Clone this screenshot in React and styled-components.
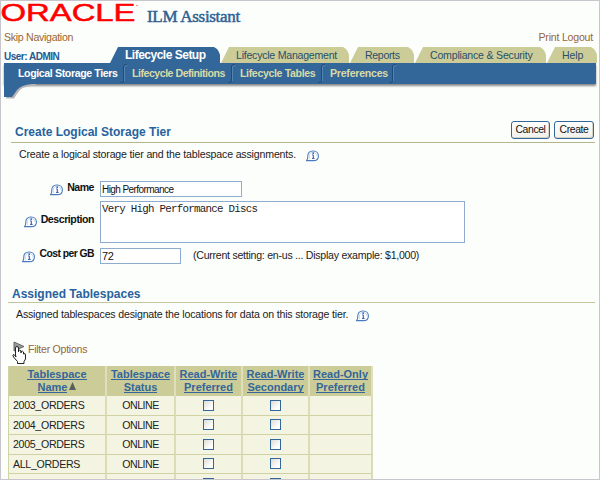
import React from "react";
import styled, { createGlobalStyle } from "styled-components";

const Global = createGlobalStyle`
  * { box-sizing: border-box; }
  body { margin: 0; overflow: hidden; background: #fcfefc; }
`;

const Page = styled.div`
  width: 600px;
  height: 480px;
  overflow: hidden;
  display: flex;
  flex-direction: column;
  background: #fcfefc;
  border: 1px solid #c9c5cc;
  font-family: "Liberation Sans", Arial, sans-serif;
  font-size: 11px;
  color: #222;
`;

const Text = styled.span`
  display: block;
  white-space: nowrap;
  line-height: 14px;
  font-size: ${(p) => p.$size || 10.6}px;
  font-weight: ${(p) => (p.$bold ? 700 : 400)};
  letter-spacing: ${(p) => p.$track || 0}px;
  color: ${(p) => p.$color || "#222"};
`;

const Brand = styled.header`
  height: 28px;
  flex: none;
  display: flex;
  align-items: flex-start;
`;

const Product = styled.h1`
  margin: 6px 0 0 9px;
  font: 400 17px/20px "Liberation Serif", serif;
  -webkit-text-stroke: 0.5px #2f6193;
  letter-spacing: -0.3px;
  color: #2f6193;
  white-space: nowrap;
`;

const Links = styled.nav`
  height: 18px;
  flex: none;
  padding: 1px 6px 0 3px;
  display: flex;
  justify-content: space-between;
`;

const TabRow = styled.nav`
  height: 16px;
  flex: none;
  display: flex;
  padding-left: 3px;
`;

const User = styled.div`
  width: 106px;
  padding-top: 3px;
`;

const Tab = styled.div`
  width: ${(p) => p.$w}px;
  height: 16px;
  margin-right: 1px;
  padding: 1px 0 0 15px;
  background: ${(p) => (p.$active ? "#336699" : "#cccc99")};
  clip-path: polygon(0 100%, 8px 0, calc(100% - 6px) 0, calc(100% - 3px) 2px, calc(100% - 1px) 5px, 100% 8px, 100% 100%);
`;

const SubBar = styled.nav`
  height: 21px;
  flex: none;
  margin: 0 3px 0 3px;
  padding: 3px 0 0 14px;
  display: flex;
  background: #336699;
  box-shadow: 0 2px 2px #8a8a8a;
`;

const SubTab = styled.div`
  width: ${(p) => p.$w}px;
  display: flex;
  justify-content: space-between;
  svg { flex: none; margin: -3px 4px 0 0; }
`;

const Corner = styled.svg`
  display: block;
  flex: none;
  margin-left: 3px;
`;

const TitleBar = styled.div`
  height: 24px;
  flex: none;
  margin: 20px 4px 0 10px;
  padding-left: 4px;
  display: flex;
  justify-content: space-between;
  border-bottom: 1px solid #b5b58c;
`;

const PageTitle = styled(Text)`
  margin: 6px 0 0;
`;

const Buttons = styled.div`
  display: flex;
  gap: 4px;
  padding: 2px 1px 0 0;
`;

const Button = styled.button`
  width: ${(p) => p.$w}px;
  height: 18px;
  padding: 0;
  border: 1px solid #336699;
  border-radius: 3px;
  background: linear-gradient(#fff, #f1f0ea);
  box-shadow: inset -1px -1px 0 #d6d3c8;
  color: #111;
  font: 10.4px/14px "Liberation Sans", sans-serif;
  letter-spacing: -0.4px;
`;

const Note = styled.div`
  flex: none;
  height: ${(p) => p.$h}px;
  padding: ${(p) => p.$top}px 0 0 ${(p) => p.$left}px;
  display: flex;
  gap: ${(p) => p.$gap}px;
  svg { margin-top: 3px; }
`;

const Field = styled.div`
  flex: none;
  height: ${(p) => p.$h}px;
  display: flex;
  align-items: flex-start;
`;

const FieldLabel = styled.label`
  width: 99px;
  margin-top: -1px;
  padding: ${(p) => p.$top}px 6px 0 0;
  display: flex;
  justify-content: flex-end;
  gap: 4px;
  svg { margin-top: 4px; }
`;

const Input = styled.input`
  width: ${(p) => p.$w}px;
  height: 16px;
  padding: 0 1px;
  border: 1px solid #8eacce;
  background: #fff;
  color: #111;
  outline: none;
  font: ${(p) => p.$size || 10}px "Liberation Sans", sans-serif;
  letter-spacing: ${(p) => p.$track || 0}px;
`;

const Area = styled.textarea`
  width: 365px;
  height: 42px;
  padding: 1px;
  margin: 0;
  border: 1px solid #8eacce;
  background: #fff;
  color: #222;
  outline: none;
  resize: none;
  overflow: hidden;
  font: 10.8px/13px "Liberation Mono", monospace;
  letter-spacing: -0.73px;
`;

const Section = styled.div`
  flex: none;
  height: 18px;
  margin: 20px 4px 0 7px;
  padding: 2px 0 0 4px;
  border-bottom: 1px solid #c3c69b;
`;

const Filter = styled.div`
  flex: none;
  height: 27px;
  padding: 3px 0 0 27px;
  position: relative;
`;

const Pointer = styled.svg`
  position: absolute;
  left: 10px;
  top: 0;
`;

const Table = styled.div`
  flex: none;
  width: 365px;
  margin-left: 7px;
  display: grid;
  grid-template-columns: 98px 69px 67px 67px 63px;
  grid-template-rows: 30px;
  grid-auto-rows: 19.5px;
  border-left: 1px solid #d2d3a5;
`;

const Head = styled.div`
  background: #cccc99;
  border-right: 2px solid #dedfbc;
  padding-top: 2px;
  display: flex;
  flex-direction: column;
  align-items: center;
  gap: 1px;
`;

const HeadLine = styled.div`
  display: flex;
  gap: 2px;
  span {
    line-height: 12px;
    height: 12px;
    border-bottom: 1px solid #336699;
  }
  svg { margin-top: 1px; }
`;

const Cell = styled.div`
  display: flex;
  align-items: center;
  justify-content: ${(p) => (p.$left ? "flex-start" : "center")};
  padding-left: ${(p) => (p.$left ? 4 : 0)}px;
  background: #f3f5e2;
  border-right: 2px solid #dcddb8;
  border-bottom: 1px solid #d0d2a4;
`;

const Check = styled.span`
  width: 11px;
  height: 11px;
  border: 1px solid #336699;
  background: linear-gradient(135deg, #dedcd5, #fff 75%);
`;

const Info = () => (
  <svg width="13" height="12" viewBox="0 0 13 12" fill="none">
    <path d="M0.5 10.6H7.5C10.5 10.6 12.4 8.6 12.4 5.9C12.4 3 10.4 1 7.3 1H6.7C3.6 1 1.8 3 1.8 5.8C1.8 7.5 2 8.6 0.5 10.6Z" fill="#fff" stroke="#4a7cbd" strokeWidth="1.1" />
    <path d="M3.2 9.3C3.8 8.7 3.2 7.4 3.2 5.9C3.2 4 4.7 2.5 7 2.5S11 3.9 11 5.9" stroke="#c3d5ec" />
    <path d="M6.2 4.9H7.3V8M6 8.4H8.6" stroke="#2456b0" />
    <rect x="6.5" y="2.5" width="1.5" height="1.4" fill="#2456b0" />
  </svg>
);

const Divider = () => (
  <svg width="8" height="21" viewBox="0 0 8 21" fill="none">
    <path d="M0.5 19.5H2Q3.5 19.5 3.5 17.5V4Q3.5 1.5 5.5 1.5H7" stroke="#1f4b7b" />
    <path d="M4.5 18V4Q4.5 2.5 7.5 2.5" stroke="#5c8bb8" strokeWidth=".8" />
  </svg>
);

const TABS = [
  { t: "Lifecycle Setup", w: 110, size: 12, track: -0.5, active: true },
  { t: "Lifecycle Management", w: 128, track: -0.25 },
  { t: "Reports", w: 64, track: -0.35 },
  { t: "Compliance & Security", w: 131, track: -0.22 },
  { t: "Help", w: 50, track: -0.1 },
];

const SUBS = [
  { t: "Logical Storage Tiers", w: 114, track: -0.38, active: true },
  { t: "Lifecycle Definitions", w: 108, track: -0.48 },
  { t: "Lifecycle Tables", w: 90, track: -0.36 },
  { t: "Preferences", w: 71, track: -0.24 },
];

const COLUMNS = [
  ["Tablespace", "Name"],
  ["Tablespace", "Status"],
  ["Read-Write", "Preferred"],
  ["Read-Write", "Secondary"],
  ["Read-Only", "Preferred"],
];

const ROWS = ["2003_ORDERS", "2004_ORDERS", "2005_ORDERS", "ALL_ORDERS", ""];

export default function App() {
  return (
    <Page>
      <Global />
      <Brand>
        <svg width="137" height="24" viewBox="0 0 137 24">
          <text x="-0.5" y="20" fontFamily="Liberation Sans" fontSize="23" fill="#f00" stroke="#f00" strokeWidth=".5" textLength="135" lengthAdjust="spacingAndGlyphs">ORACLE</text>
          <circle cx="136" cy="4.5" r=".8" fill="#f66" />
        </svg>
        <Product>ILM Assistant</Product>
      </Brand>
      <Links>
        <Text $track={-0.3} $color="#996633">Skip Navigation</Text>
        <Text $track={-0.22} $color="#996633">Print Logout</Text>
      </Links>
      <TabRow>
        <User><Text $bold $size={10} $track={-0.5} $color="#235a92">User: ADMIN</Text></User>
        {TABS.map((x) => (
          <Tab key={x.t} $w={x.w} $active={x.active}>
            <Text $bold={x.active} $size={x.size} $track={x.track} $color={x.active ? "#fff" : "#294f68"}>{x.t}</Text>
          </Tab>
        ))}
      </TabRow>
      <SubBar>
        {SUBS.map((x) => (
          <SubTab key={x.t} $w={x.w}>
            <Text $bold $track={x.track} $color={x.active ? "#fff" : "#d9dba6"}>{x.t}</Text>
            <Divider />
          </SubTab>
        ))}
      </SubBar>
      <Corner width="34" height="15" viewBox="0 0 34 15">
        <path d="M2 14.5H10Q14 8 17 5Q21 2 32 1.5V0H3Z" fill="#b5b5b5" />
        <path d="M0 0H28Q17 1 13 6Q11 9 8 13H0Z" fill="#336699" />
      </Corner>
      <TitleBar>
        <PageTitle as="h2" $bold $size={12} $color="#28629d">Create Logical Storage Tier</PageTitle>
        <Buttons><Button $w={39}>Cancel</Button><Button $w={40}>Create</Button></Buttons>
      </TitleBar>
      <Note $h={38} $top={4} $left={18} $gap={10}>
        <Text $track={-0.17}>Create a logical storage tier and the tablespace assignments.</Text><Info />
      </Note>
      <Field $h={20}>
        <FieldLabel $top={0}><Info /><Text $bold $track={-0.5} $color="#111">Name</Text></FieldLabel>
        <Input $w={142} $track={-0.57} defaultValue="High Performance" />
      </Field>
      <Field $h={47}>
        <FieldLabel $top={12}><Info /><Text $bold $track={-0.45} $color="#111">Description</Text></FieldLabel>
        <Area defaultValue="Very High Performance Discs" />
      </Field>
      <Field $h={17}>
        <FieldLabel $top={0}><Info /><Text $bold $size={10.4} $track={-0.55} $color="#111">Cost per GB</Text></FieldLabel>
        <Input $w={81} $size={11} $track={-0.4} defaultValue="72" />
        <Note $h={16} $top={0} $left={12} $gap={0}><Text $track={-0.26}>(Current setting: en-us ... Display example: $1,000)</Text></Note>
      </Field>
      <Section><Text $bold $size={12} $color="#28629d">Assigned Tablespaces</Text></Section>
      <Note $h={36} $top={4} $left={15} $gap={8}>
        <Text $track={-0.18}>Assigned tablespaces designate the locations for data on this storage tier.</Text><Info />
      </Note>
      <Filter>
        <Pointer width="18" height="26" viewBox="0 0 18 26">
          <path d="M3 3L13 7.5L3 12Z" fill="#999" stroke="#666" />
          <path d="M4.5 16V9Q4.5 7.5 6 7.5Q7.5 7.5 7.5 9V13V11.5Q9 10.5 10 12V14V12.5Q11.5 11.5 12.5 13V15Q14.5 13.5 14.5 16V20L13 22.5V24.5H6.5V22.5L2.5 18Q1 15.5 3 15.5L5 18Z" fill="#fff" stroke="#222" />
        </Pointer>
        <Text $track={-0.27} $color="#996633">Filter Options</Text>
      </Filter>
      <Table>
        {COLUMNS.map(([a, b], i) => (
          <Head key={i}>
            <HeadLine><Text $bold $size={11} $color="#336699">{a}</Text></HeadLine>
            <HeadLine>
              <Text $bold $size={11} $color="#336699">{b}</Text>
              {i === 0 && <svg width="7" height="9"><path d="M3.5 0L7 8H0Z" fill="#59605a" /></svg>}
            </HeadLine>
          </Head>
        ))}
        {ROWS.map((name) => (
          <React.Fragment key={name}>
            <Cell $left><Text $track={-0.3}>{name}</Text></Cell>
            <Cell><Text $track={-0.5}>{name && "ONLINE"}</Text></Cell>
            <Cell><Check /></Cell>
            <Cell><Check /></Cell>
            <Cell />
          </React.Fragment>
        ))}
      </Table>
    </Page>
  );
}
